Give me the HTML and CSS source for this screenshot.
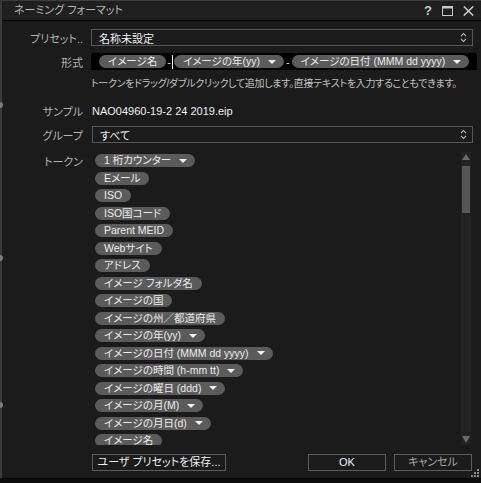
FILE: index.html
```html
<!DOCTYPE html>
<html lang="ja">
<head>
<meta charset="utf-8">
<title>ネーミング フォーマット</title>
<link rel="stylesheet" href="styles.css">
</head>
<body>
<div class="window">
  <span class="edge-bump b1"></span><span class="edge-bump b2"></span><span class="edge-bump b3"></span>
  <div class="titlebar">
    <span class="title">ネーミング フォーマット</span>
    <div class="tb-icons">
      <span class="help">?</span>
      <svg class="tb-max" width="11" height="10" viewBox="0 0 11 10"><rect x="0.5" y="0.5" width="10" height="9" fill="none" stroke="#c8c8c8" stroke-width="1"/><rect x="0" y="0" width="11" height="2.5" fill="#c8c8c8"/></svg>
      <svg class="tb-close" width="11" height="10" viewBox="0 0 11 10"><path d="M0.8 0.5 L10.2 9.5 M10.2 0.5 L0.8 9.5" stroke="#c8c8c8" stroke-width="1.6" fill="none"/></svg>
    </div>
  </div>
  <div class="content">
    <div class="row r-preset">
      <span class="lbl">プリセット..</span>
      <div class="select"><span class="sel-text">名称未設定</span><svg class="chev" width="7" height="11" viewBox="0 0 7 11"><path d="M1 4.2 L3.5 1.5 L6 4.2 M1 6.8 L3.5 9.5 L6 6.8" stroke="#bdbdbd" stroke-width="1.1" fill="none"/></svg></div>
    </div>
    <div class="row r-format">
      <span class="lbl">形式</span>
      <div class="format">
        <span class="pill">イメージ名</span><span class="sep">-</span><span class="caret"></span><span class="pill">イメージの年(yy)<i class="tri"></i></span><span class="sep sep2">-</span><span class="pill">イメージの日付 (MMM dd yyyy)<i class="tri"></i></span>
      </div>
    </div>
    <div class="row r-hint">
      <span></span>
      <p class="hint">トークンをドラッグ/ダブルクリックして追加します。直接テキストを入力することもできます。</p>
    </div>
    <div class="row r-sample">
      <span class="lbl">サンプル</span>
      <span class="sample">NAO04960-19-2 24 2019.eip</span>
    </div>
    <div class="row r-group">
      <span class="lbl">グループ</span>
      <div class="select"><span class="sel-text">すべて</span><svg class="chev" width="7" height="11" viewBox="0 0 7 11"><path d="M1 4.2 L3.5 1.5 L6 4.2 M1 6.8 L3.5 9.5 L6 6.8" stroke="#bdbdbd" stroke-width="1.1" fill="none"/></svg></div>
    </div>
    <div class="row r-tokens">
      <span class="lbl lbl-top">トークン</span>
      <div class="tokens">
        <div class="token-list">
          <span class="pill">1 桁カウンター<i class="tri"></i></span>
          <span class="pill">Eメール</span>
          <span class="pill">ISO</span>
          <span class="pill">ISO国コード</span>
          <span class="pill">Parent MEID</span>
          <span class="pill">Webサイト</span>
          <span class="pill">アドレス</span>
          <span class="pill">イメージ フォルダ名</span>
          <span class="pill">イメージの国</span>
          <span class="pill">イメージの州／都道府県</span>
          <span class="pill">イメージの年(yy)<i class="tri"></i></span>
          <span class="pill">イメージの日付 (MMM dd yyyy)<i class="tri"></i></span>
          <span class="pill">イメージの時間 (h-mm tt)<i class="tri"></i></span>
          <span class="pill">イメージの曜日 (ddd)<i class="tri"></i></span>
          <span class="pill">イメージの月(M)<i class="tri"></i></span>
          <span class="pill">イメージの月日(d)<i class="tri"></i></span>
          <span class="pill">イメージ名</span>
        </div>
        <div class="scrollbar">
          <span class="sb-arrow up"></span>
          <span class="sb-thumb"></span>
          <span class="sb-track"></span>
          <span class="sb-arrow down"></span>
        </div>
      </div>
    </div>
    <div class="row r-buttons">
      <span></span>
      <div class="buttons">
        <button class="btn save">ユーザ プリセットを保存...</button>
        <span class="spacer"></span>
        <button class="btn ok">OK</button>
        <button class="btn cancel">キャンセル</button>
      </div>
    </div>
  </div>
  <svg class="grip" width="8" height="8" viewBox="0 0 8 8"><g fill="#8a8a8a"><rect x="6" y="0" width="2" height="2"/><rect x="3" y="3" width="2" height="2"/><rect x="6" y="3" width="2" height="2"/><rect x="0" y="6" width="2" height="2"/><rect x="3" y="6" width="2" height="2"/><rect x="6" y="6" width="2" height="2"/></g></svg>
</div>
</body>
</html>
```
FILE: styles.css
```css
html, body {
  margin: 0;
  padding: 0;
}
body {
  background: #0d0d0d;
  font-family: "Liberation Sans", "Noto Sans CJK JP", sans-serif;
  font-size: 11px;
  font-feature-settings: "palt" 1;
  color: #e4e4e4;
}
.window {
  position: relative;
  width: 481px;
  height: 479px;
  box-sizing: border-box;
  background: #1b1b1b;
  border-left: 2px solid #3a3a3a;
  border-top: 1px solid #3d3d3d;
  border-bottom: 1px solid #050505;
}
.edge-bump {
  position: absolute;
  left: -2px;
  width: 3px;
  height: 6px;
  border-radius: 0 3px 3px 0;
  background: #7a7a7a;
}
.b1 { top: 101px; }
.b2 { top: 254px; }
.b3 { top: 401px; }

.titlebar {
  height: 19px;
  display: flex;
  align-items: center;
  justify-content: space-between;
  padding: 0 7px 0 11px;
  margin-left: 1px;
  background: #1f1f1f;
  border-bottom: 1px solid #000;
}
.title {
  color: #b8b8b8;
  font-size: 11px;
  line-height: 19px;
}
.tb-icons {
  display: flex;
  align-items: center;
  gap: 10px;
}
.help {
  color: #c8c8c8;
  font-weight: bold;
  font-size: 13px;
  line-height: 13px;
  width: 8px;
}
.content {
  padding: 8px 8px 0 6px;
}
.row {
  display: grid;
  grid-template-columns: 75px 1fr;
  column-gap: 8px;
  align-items: center;
}
.lbl {
  text-align: right;
  color: #b3b3b3;
  font-size: 11px;
  white-space: nowrap;
}
.lbl-top {
  align-self: start;
  padding-top: 1px;
}
.select {
  height: 17px;
  box-sizing: border-box;
  border: 1px solid #575757;
  background: #1b1b1b;
  display: flex;
  align-items: center;
  justify-content: space-between;
  padding: 0 5px 0 7px;
}
.sel-text {
  color: #f0f0f0;
  font-size: 11px;
}
.r-format { margin-top: 7px; }
.format {
  height: 17px;
  background: #000;
  display: flex;
  align-items: center;
  padding: 0 8px;
}
.pill {
  display: inline-flex;
  align-items: center;
  height: 13px;
  line-height: 13px;
  padding: 0 9px;
  border-radius: 7px;
  background: #5b5b5b;
  color: #ececec;
  font-size: 10.5px;
  white-space: nowrap;
}
.tri {
  display: inline-block;
  margin-left: 8px;
  width: 0;
  height: 0;
  border-left: 4px solid transparent;
  border-right: 4px solid transparent;
  border-top: 4px solid #f0f0f0;
}
.pill:has(.tri) { padding-right: 8px; }
.sep {
  color: #dcdcdc;
  margin: 0 1px 0 1px;
}
.sep2 { margin: 0 2px; }
.caret {
  width: 1px;
  height: 14px;
  background: #fff;
  margin-right: 1px;
}
.r-hint { margin-top: 7px; }
.hint {
  margin: 0;
  color: #c2c2c2;
  font-size: 10px;
  letter-spacing: -0.3px;
  line-height: 14px;
  white-space: nowrap;
}
.r-sample { margin-top: 12px; }
.sample {
  color: #f0f0f0;
  padding-left: 1px;
  line-height: 14px;
}
.r-group { margin-top: 7px; }
.r-group .select { margin-left: 1px; }
.r-tokens {
  margin-top: 9px;
  align-items: start;
}
.tokens {
  height: 293px;
  display: flex;
  justify-content: space-between;
  overflow: hidden;
}
.token-list {
  display: flex;
  flex-direction: column;
  align-items: flex-start;
  gap: 4.5px;
  padding: 2px 0 0 4px;
}
.scrollbar {
  width: 10px;
  margin-right: 2px;
  background: #222;
  display: flex;
  flex-direction: column;
  align-items: center;
}
.sb-arrow {
  width: 0;
  height: 0;
  border-left: 4px solid transparent;
  border-right: 4px solid transparent;
}
.sb-arrow.up {
  margin: 2px 0 6px;
  border-bottom: 6px solid #6a6a6a;
}
.sb-arrow.down {
  margin: 0 0 2px;
  border-top: 7px solid #6a6a6a;
}
.sb-thumb {
  width: 8px;
  height: 47px;
  background: #565656;
}
.sb-track { flex: 1; }
.r-buttons { margin-top: 9px; }
.buttons {
  display: flex;
  align-items: center;
  gap: 8px;
}
.spacer { flex: 1; }
.btn {
  height: 17px;
  box-sizing: border-box;
  border: 1px solid #5c5c5c;
  background: #1b1b1b;
  color: #f0f0f0;
  font-family: "Liberation Sans", "Noto Sans CJK JP", sans-serif;
  font-feature-settings: "palt" 1;
  font-size: 11px;
  padding: 0;
  line-height: 15px;
}
.save { width: 134px; margin-left: 1px; }
.ok, .cancel { width: 78px; }
.cancel { color: #a8a8a8; margin-right: 1px; }
.grip {
  position: absolute;
  right: 2px;
  bottom: 1px;
}
```
